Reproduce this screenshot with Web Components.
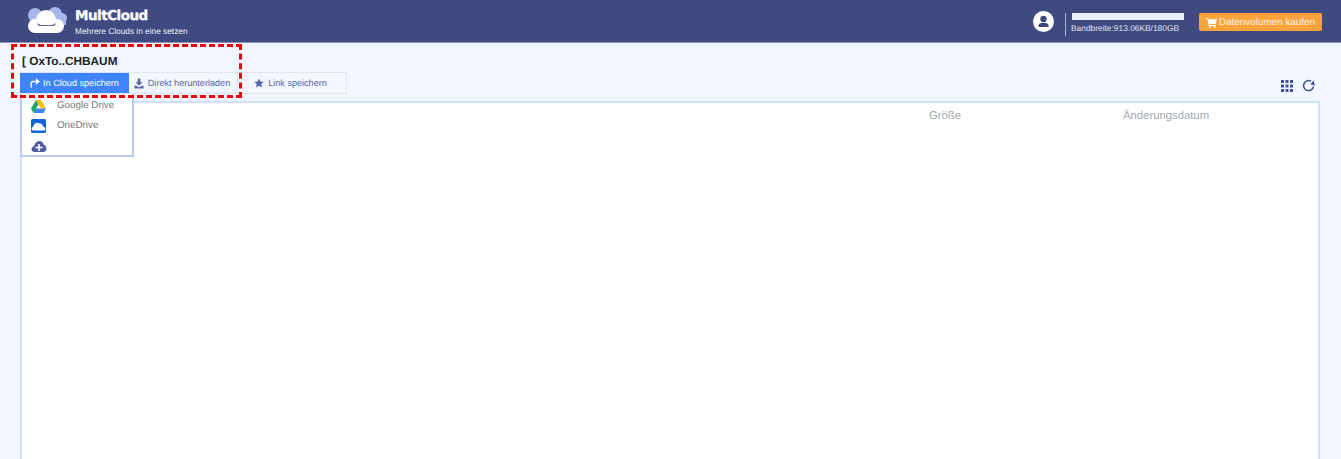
<!DOCTYPE html>
<html lang="de">
<head>
<meta charset="utf-8">
<title>MultCloud</title>
<style>
  html, body { margin: 0; height: 100%; overflow: hidden; }
  body { background: #f2f6fe; font-family: "Liberation Sans", Arial, sans-serif; text-rendering: geometricPrecision; }
</style>
</head>
<body>
<app-page></app-page>

<script>
class AppHeader extends HTMLElement {
    connectedCallback() {
        this.attachShadow({ mode: 'open' }).innerHTML = `
            <style>
            :host { display: flex; align-items: flex-start; height: 42px; background: #3f4a80; border-bottom: 1px solid #8d95ba; color: #fff; }
            .logo { margin: 7px 0 0 26px; width: 44px; height: 29px; flex: none; }
            .brand { margin: 7px 0 0 5px; flex: 1; }
            .name { font: bold 13.5px/18px "DejaVu Sans", sans-serif; letter-spacing: -.5px; -webkit-text-stroke: .3px #fff; }
            .slogan { font-size: 8.300px; line-height: 12px; color: #eef1fb; }
            .user { margin: 11px 0 0; width: 21px; height: 21px; flex: none; }
            .sep { width: 1px; height: 23px; margin: 13px 4px 0 11px; background: #aeb4d0; }
            .usage { width: 114px; margin: 13px 15px 0 0; }
            .bar { height: 7px; width: 112px; margin-left: 2px; background: #eceef7; }
            .usage span { display: block; font-size: 8.400px; line-height: 12px; margin: 2px 0 0 1px; color: #e3e6f2; white-space: nowrap; }
            .buy { display: flex; align-items: center; gap: 2px; box-sizing: border-box; width: 123px; height: 18px; margin: 13px 19px 0 0; padding-left: 7px; background: #fca33c; border-radius: 2px; font-size: 9.900px; color: #fff5e6; white-space: nowrap; }
            </style>
            <svg class="logo" viewBox="0 0 44 29">
                <g fill="#a9b6ee"><circle cx="9" cy="8" r="7"/><circle cx="29" cy="7" r="7"/><circle cx="36" cy="11" r="5"/><rect x="4" y="8" width="36" height="10"/></g>
                <g fill="#fff"><circle cx="20" cy="13" r="10"/><circle cx="9" cy="19" r="7"/><circle cx="31" cy="19" r="7"/><rect x="9" y="15" width="22" height="11"/></g>
                <path fill="none" stroke="#5b6590" stroke-width="1.200" stroke-linecap="round" d="M12 17c1 1 1 1.500 3 1.500h11c2 0 2-.5 3-1.500"/>
            </svg>
            <div class="brand">
                <div class="name">MultCloud</div>
                <div class="slogan">Mehrere Clouds in eine setzen</div>
            </div>
            <svg class="user" viewBox="0 0 21 21">
                <circle cx="10.500" cy="10.500" r="10.500" fill="#fff"/>
                <circle cx="10.500" cy="8" r="3.200" fill="#3f4a80"/>
                <path fill="#3f4a80" d="M5.500 16v-1.500c0-1.800 1.800-2.700 5-2.700s5 .9 5 2.700V16z"/>
            </svg>
            <div class="sep"></div>
            <div class="usage">
                <div class="bar"></div>
                <span>Bandbreite:913.06KB/180GB</span>
            </div>
            <div class="buy">
                <svg width="11" height="11" viewBox="0 0 11 11"><path fill="#fff" d="M0 1h2l.4 1.300H11l-1.200 4.700H3.500l.2 1h6v1H2.900L1.300 2H0z"/><circle cx="4" cy="10" r="1" fill="#fff"/><circle cx="8.800" cy="10" r="1" fill="#fff"/></svg>
                Datenvolumen kaufen
            </div>`;
    }
}

class SaveTab extends HTMLElement {
    connectedCallback() {
        this.attachShadow({ mode: 'open' }).innerHTML = `
            <style>
            :host { display: flex; align-items: center; justify-content: center; gap: 4px; box-sizing: border-box; height: 100%; padding-right: 2px; font-size: 9.100px; color: #5a64a8; white-space: nowrap; }
            :host([active]) { background: #3f84fb; color: #fff; gap: 3px; padding-right: 0; }
            :host([divided]) { border-left: 1px solid #dbe5f5; padding-right: 4px; }
            ::slotted(svg) { flex: none; }
            </style>
            <slot name="icon"></slot><slot></slot>`;
    }
}

class CloudItem extends HTMLElement {
    connectedCallback() {
        this.attachShadow({ mode: 'open' }).innerHTML = `
            <style>
            :host { display: flex; align-items: center; height: 20px; padding-left: 9px; font-size: 9.800px; color: #777; }
            .label { margin-left: 11px; position: relative; top: -1px; }
            </style>
            <slot name="icon"></slot><span class="label"><slot></slot></span>`;
    }
}

class CloudMenu extends HTMLElement {
    connectedCallback() {
        this.attachShadow({ mode: 'open' }).innerHTML = `
            <style>
            :host { position: absolute; left: 20px; top: 94px; z-index: 2; box-sizing: border-box; width: 114px; height: 63px; padding-top: 2px; background: #fff; border: 2px solid #bcc7f2; border-top: 0; }
            </style>
            <slot></slot>`;
    }
}

class FilePanel extends HTMLElement {
    connectedCallback() {
        this.attachShadow({ mode: 'open' }).innerHTML = `
            <style>
            :host { display: block; box-sizing: border-box; height: 359px; margin: 0 21px 0 20px; padding: 6px 0 0; background: #fff; border: 2px solid #cfe0f9; border-bottom: 0; }
            .head { display: grid; grid-template-columns: 907px 194px auto; font-size: 11.300px; line-height: 14px; color: #a2a6ad; }
            </style>
            <div class="head"><span></span><span>Größe</span><span>Änderungsdatum</span></div>`;
    }
}

class AppPage extends HTMLElement {
    connectedCallback() {
        this.attachShadow({ mode: 'open' }).innerHTML = `
            <style>
            :host { display: block; position: relative; height: 459px; overflow: hidden; }
            h1 { margin: 0; padding: 11px 0 0 22px; height: 18px; font-size: 11.800px; line-height: 14px; font-weight: bold; color: #222; }
            .bar { display: flex; align-items: flex-start; justify-content: space-between; height: 29px; padding: 0 21px 0 20px; }
            .tabs { display: grid; grid-template-columns: 109px 108px 110px; box-sizing: border-box; height: 22px; width: 327px; border: 1px solid #dbe5f5; border-left: 0; }
            .tools { display: flex; gap: 9px; align-items: center; margin: 7px 5px 0 0; }
            .frame { position: absolute; left: 11px; top: 44px; width: 231px; height: 54px; box-sizing: border-box; border: 3px dashed #f00008; pointer-events: none; z-index: 3; }
            </style>
            <app-header></app-header>
            <h1>[ OxTo..CHBAUM</h1>
            <div class="bar">
                <div class="tabs">
                    <save-tab active>
                        <svg slot="icon" width="10" height="10" viewBox="0 0 10 10"><path fill="none" stroke="#fff" stroke-width="1.400" d="M1.200 9.500V5.500Q1.200 3.500 3.200 3.500H6.500"/><path fill="#fff" d="M6 0.300 9.800 3.500 6 6.700z"/></svg>
                        In Cloud speichern
                    </save-tab>
                    <save-tab>
                        <svg slot="icon" width="10" height="11" viewBox="0 0 11 11"><path fill="#5a64a8" d="M4 0h3v4h2.500L5.500 8 1.500 4H4z"/><path fill="#5a64a8" d="M.5 8h2.300l1.500 1.300h2.400L8.200 8h2.300v3H.5z"/></svg>
                        Direkt herunterladen
                    </save-tab>
                    <save-tab divided>
                        <svg slot="icon" width="10" height="10" viewBox="0 0 10 10"><path fill="#5a64a8" d="M5 .5l1.400 3 3.300.4-2.400 2.200.6 3.300L5 7.800 2.100 9.400l.6-3.300L.3 3.900l3.300-.4z"/></svg>
                        Link speichern
                    </save-tab>
                </div>
                <div class="tools">
                    <svg width="12" height="12" viewBox="0 0 12 12" fill="#3f4fa0"><rect width="3" height="3"/><rect x="4.500" width="3" height="3"/><rect x="9" width="3" height="3"/><rect y="4.500" width="3" height="3"/><rect x="4.500" y="4.500" width="3" height="3"/><rect x="9" y="4.500" width="3" height="3"/><rect y="9" width="3" height="3"/><rect x="4.500" y="9" width="3" height="3"/><rect x="9" y="9" width="3" height="3"/></svg>
                    <svg width="13" height="13" viewBox="0 0 13 13"><path fill="none" stroke="#3f4f90" stroke-width="1.500" d="M11.500 7.500A5 5 0 1 1 9 2.200"/><path fill="#3f4f90" d="M8.500 5.500 13 6.500 11.500 1.500z"/></svg>
                </div>
            </div>
            <cloud-menu>
                <cloud-item>
                    <svg slot="icon" width="15" height="13" viewBox="0 0 15 13"><path fill="#fbbc04" d="M5 0h5l5 8.500h-5z"/><path fill="#1fa463" d="M5 0l2.500 4.300L2.500 13 0 8.500z"/><path fill="#4285f4" d="M5 8.500h10L12.500 13h-10z"/></svg>
                    Google Drive
                </cloud-item>
                <cloud-item>
                    <svg slot="icon" width="15" height="14" viewBox="0 0 15 14"><rect width="15" height="14" rx="1.500" fill="#1463d8"/><path fill="#fff" d="M2.500 11.500C.5 11.500 0 8.500 2 8 2.500 5 6 2.500 8.500 4.500c2-.5 3.500 1 3.500 3 2.500 0 3.500 4 .5 4z"/></svg>
                    OneDrive
                </cloud-item>
                <cloud-item>
                    <svg slot="icon" width="16" height="11" viewBox="0 0 15 11"><path fill="#525da0" d="M3 11C1 11 0 9.500 0 8s1-2.500 2.500-2.800C3 2.500 5.500 0 8 0c2.300 0 4 1.800 4.300 3.800C14 4.300 15 6 15 7.500 15 9.500 13.500 11 11.500 11z"/><path fill="#fff" d="M6.700 3h1.600v2.700H11v1.600H8.300V10H6.700V7.300H4V5.700h2.700z"/></svg>
                </cloud-item>
            </cloud-menu>
            <file-panel></file-panel>
            <div class="frame"></div>`;
    }
}

customElements.define('app-header', AppHeader);
customElements.define('save-tab', SaveTab);
customElements.define('cloud-item', CloudItem);
customElements.define('cloud-menu', CloudMenu);
customElements.define('file-panel', FilePanel);
customElements.define('app-page', AppPage);
</script>
</body>
</html>
